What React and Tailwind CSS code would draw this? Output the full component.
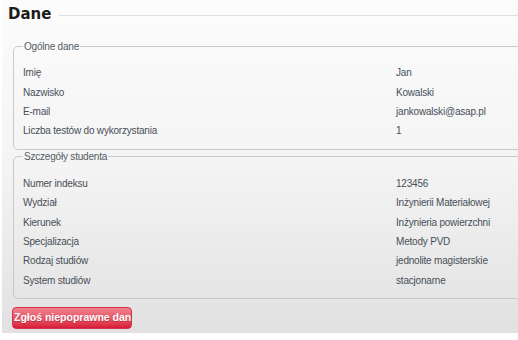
const general = [
  ['Imię', 'Jan'],
  ['Nazwisko', 'Kowalski'],
  ['E-mail', 'jankowalski@asap.pl'],
  ['Liczba testów do wykorzystania', '1'],
]

const student = [
  ['Numer indeksu', '123456'],
  ['Wydział', 'Inżynierii Materiałowej'],
  ['Kierunek', 'Inżynieria powierzchni'],
  ['Specjalizacja', 'Metody PVD'],
  ['Rodzaj studiów', 'jednolite magisterskie'],
  ['System studiów', 'stacjonarne'],
]

function Section({ title, rows, className }) {
  return (
    <fieldset className={`ml-[11px] -mr-[20px] border border-[#c9c9c9] rounded-[5px] pl-[9px] ${className}`}>
      <legend className="px-[1px] text-[#555b62] leading-[13px]">{title}</legend>
      {rows.map(([label, value]) => (
        <div key={label} className="flex items-center h-[19.4px]">
          <span className="w-[373px] shrink-0">{label}</span>
          <span>{value}</span>
        </div>
      ))}
    </fieldset>
  )
}

export default function App() {
  return (
    <div
      className="w-[518px] h-[340px] bg-white overflow-hidden text-[10px] tracking-[-0.2px] text-[#484f58]"
      style={{ fontFamily: '"Liberation Sans", Arial, sans-serif' }}
    >
      <div className="ml-[2px] h-[333px] overflow-hidden bg-gradient-to-b from-[#fcfcfc] via-[#f4f4f4] to-[#e1e1e1]">
        {/* heading */}
        <div className="flex items-center h-[28px] pl-[6px] gap-[8px]">
          <h2
            className="text-[15px] font-bold text-[#1c1c1c] tracking-normal leading-none"
            style={{ fontFamily: '"DejaVu Sans", Verdana, sans-serif' }}
          >
            Dane
          </h2>
          <div className="flex-1 h-px bg-[#d8e0e8] mt-[2px]" />
        </div>

        <Section title="Ogólne dane" rows={general} className="mt-[12px] pt-[10px] pb-[8px]" />
        <Section title="Szczegóły studenta" rows={student} className="mt-0 pt-[11px] pb-[8px]" />

        <button className="mt-[8px] ml-[10px] w-[120px] h-[22px] overflow-hidden whitespace-nowrap rounded-[4px] border border-[#d5344f] bg-gradient-to-b from-[#f2808f] to-[#d8193a] text-left pl-[1px] text-white font-bold text-[10.5px] tracking-normal [text-shadow:0_1px_0_rgba(120,0,20,0.35)]">
          Zgłoś niepoprawne dane
        </button>
      </div>
    </div>
  )
}
